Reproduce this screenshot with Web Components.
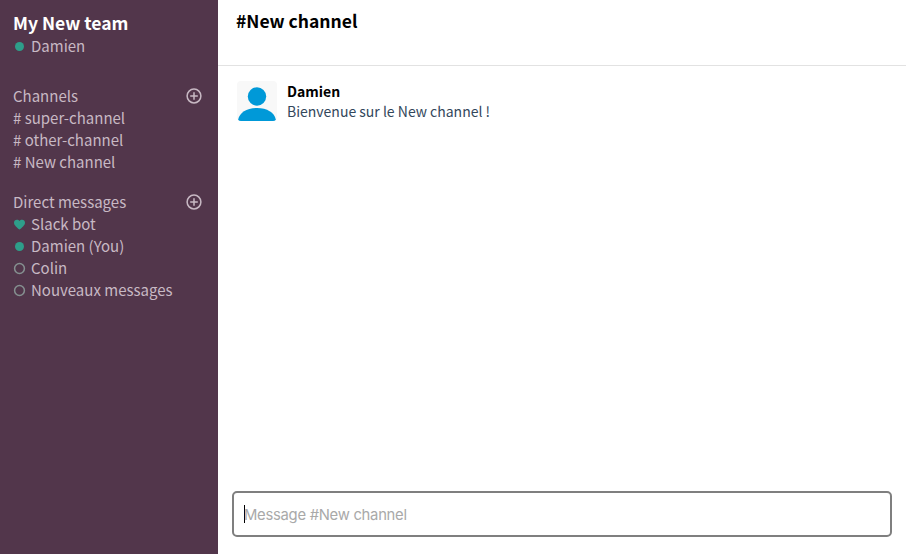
<!DOCTYPE html>
<html lang="en">
<head>
<meta charset="utf-8">
<title>My New team</title>
<style>
html, body { height: 100%; margin: 0; }
body { background: #fff; font-family: "Noto Sans CJK SC", "Noto Sans", sans-serif; }
</style>
</head>
<body>
<chat-app></chat-app>
<script>
class Base extends HTMLElement {
  constructor() {
    super();
    this.attachShadow({ mode: 'open' }).innerHTML = this.constructor.markup;
  }
}

customElements.define('status-icon', class extends HTMLElement {
  connectedCallback() {
    const shapes = {
      online: '<circle cx="6.5" cy="6.5" r="4.5" fill="#2e9e8a"/>',
      offline: '<circle cx="6.5" cy="6.5" r="4.9" fill="none" stroke="#859090" stroke-width="1.5"/>',
      bot: '<path d="M6.5 11.6C4.3 9.7 1 7.3 1 4.7C1 2.9 2.3 1.7 3.8 1.7C5 1.7 6 2.2 6.5 2.9C7 2.2 8 1.7 9.2 1.7C10.7 1.7 12 2.9 12 4.7C12 7.3 8.7 9.7 6.5 11.6Z" fill="#2e9e8a"/>'
    };
    const root = this.shadowRoot || this.attachShadow({ mode: 'open' });
    root.innerHTML = `<style>:host{display:block;width:13px;height:13px;flex:none}svg{display:block}</style>
      <svg width="13" height="13" viewBox="0 0 13 13">${shapes[this.getAttribute('type')]}</svg>`;
  }
});

customElements.define('side-row', class extends Base {
  static markup = `<style>
    :host{display:flex;align-items:center;height:22px;gap:5px;line-height:22px;font-size:15px;white-space:nowrap}
  </style><slot name="icon"></slot><span><slot></slot></span>`;
});

customElements.define('side-section', class extends Base {
  static markup = `<style>
    :host{display:block;margin-bottom:18px}
    header{display:flex;justify-content:space-between;align-items:center;padding-right:16px}
    svg{display:block}
  </style>
  <header><side-row><slot name="title"></slot></side-row>
    <svg width="16" height="16" viewBox="0 0 16 16" fill="none" stroke="#c8b9c4" stroke-width="1.5"><circle cx="8" cy="8" r="6.9"/><path d="M8 4.2V11.8M4.2 8H11.8"/></svg>
  </header><slot></slot>`;
});

customElements.define('team-sidebar', class extends Base {
  static markup = `<style>
    :host{display:block;box-sizing:border-box;background:#52364b;color:#c8b9c4;padding:11px 0 0 13px}
    h1{margin:0 0 1px;font-size:17.5px;line-height:23px;font-weight:700;color:#fff;white-space:nowrap}
    .me{margin-bottom:28px}
  </style>
  <h1>My New team</h1>
  <side-row class="me"><status-icon slot="icon" type="online"></status-icon>Damien</side-row>
  <side-section><span slot="title">Channels</span>
    <side-row># super-channel</side-row>
    <side-row># other-channel</side-row>
    <side-row># New channel</side-row>
  </side-section>
  <side-section><span slot="title">Direct messages</span>
    <side-row><status-icon slot="icon" type="bot"></status-icon>Slack bot</side-row>
    <side-row><status-icon slot="icon" type="online"></status-icon>Damien (You)</side-row>
    <side-row><status-icon slot="icon" type="offline"></status-icon>Colin</side-row>
    <side-row><status-icon slot="icon" type="offline"></status-icon>Nouveaux messages</side-row>
  </side-section>`;
});

customElements.define('user-avatar', class extends Base {
  static markup = `<style>:host{display:block;width:40px;height:40px;flex:none;border-radius:4px;overflow:hidden;background:#f8f8f8}svg{display:block}</style>
  <svg width="40" height="40" viewBox="0 0 40 40" fill="#0099d8"><circle cx="20" cy="15.5" r="9.2"/><path d="M1.2 38.5C2.5 31.5 10 27 20 27S37.5 31.5 38.8 38.5Q39 40 37.5 40H2.5Q1 40 1.2 38.5Z"/></svg>`;
});

customElements.define('chat-message', class extends Base {
  static markup = `<style>
    :host{display:flex;gap:10px;padding:15px 19px}
    .name{font-size:14px;font-weight:700;line-height:20px;color:#000}
    .text{font-size:14px;line-height:20px;color:#33475b;white-space:nowrap}
  </style>
  <user-avatar></user-avatar>
  <div><div class="name"><slot name="author"></slot></div><div class="text"><slot></slot></div></div>`;
});

customElements.define('message-composer', class extends Base {
  static markup = `<style>
    :host{display:flex;align-items:center;box-sizing:border-box;height:46px;margin:0 14px 17px;padding-left:10px;border:2px solid #7f7f7f;border-radius:5px;background:#fff}
    .caret{width:1px;height:18px;margin-right:-1px;background:#000}
    span{font:400 14.8px/20px Inter,sans-serif;letter-spacing:-.27px;padding-top:2px;color:#a9a9a9;white-space:nowrap}
  </style><div class="caret"></div><span><slot></slot></span>`;
});

customElements.define('channel-view', class extends Base {
  static markup = `<style>
    :host{display:flex;flex-direction:column;min-width:0;background:#fff}
    header{box-sizing:border-box;height:66px;border-bottom:1px solid #e2e2e2;padding:9px 18px}
    h2{margin:0;font-size:17.5px;line-height:23px;font-weight:700;color:#000}
    main{flex:1}
  </style>
  <header><h2>#New channel</h2></header>
  <main><chat-message><span slot="author">Damien</span>Bienvenue sur le New channel !</chat-message></main>
  <message-composer>Message #New channel</message-composer>`;
});

customElements.define('chat-app', class extends Base {
  static markup = `<style>:host{display:grid;grid-template-columns:218px 1fr;height:100vh;overflow:hidden}</style>
  <team-sidebar></team-sidebar><channel-view></channel-view>`;
});
</script>
</body>
</html>
